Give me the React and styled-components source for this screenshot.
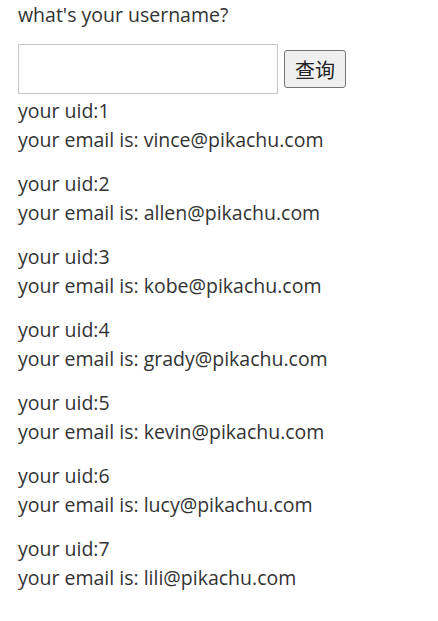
import React from 'react';
import styled, { createGlobalStyle } from 'styled-components';

const GlobalStyle = createGlobalStyle`
    body {
	margin: 0;
	background: #fff;
	font-family: "Open Sans", "Noto Sans CJK SC", sans-serif;
	color: #333;
    }
`;

const Page = styled.div`
    padding: 0 18px;
    font-size: 19.5px;
    line-height: 29px;
`;

const Prompt = styled.p`
    margin: 0 0 15px;
`;

const Form = styled.form`
    display: flex;
    align-items: center;
    gap: 6px;
    margin: 0 0 2px;
`;

const Input = styled.input`
    width: 260px;
    height: 50px;
    box-sizing: border-box;
    border: 1px solid #c4c4c4;
    padding: 0 8px;
    font-size: 20px;
    outline: none;
`;

const Button = styled.button`
    height: 38px;
    padding: 0 10px;
    font-family: "Noto Sans CJK SC", sans-serif;
    font-size: 20px;
    color: #222;
    background: #efefef;
    border: 1px solid #767676;
    border-radius: 3px;
    cursor: pointer;
`;

const User = styled.div`
    margin-bottom: ${props => props.last ? '0' : '15px'};
`;

const users = [
    [1, 'vince'], [2, 'allen'], [3, 'kobe'], [4, 'grady'],
    [5, 'kevin'], [6, 'lucy'], [7, 'lili'],
];

export default function App() {
    return (
	<Page>
	    <GlobalStyle />
	    <Prompt>what's your username?</Prompt>
	    <Form onSubmit={e => e.preventDefault()}>
		<Input type="text" />
		<Button type="submit">查询</Button>
	    </Form>
	    {users.map(([uid, name], i) => (
		<User key={uid} last={i === users.length - 1}>
		    your uid:{uid}<br />
		    your email is: {name}@pikachu.com
		</User>
	    ))}
	</Page>
    );
}
